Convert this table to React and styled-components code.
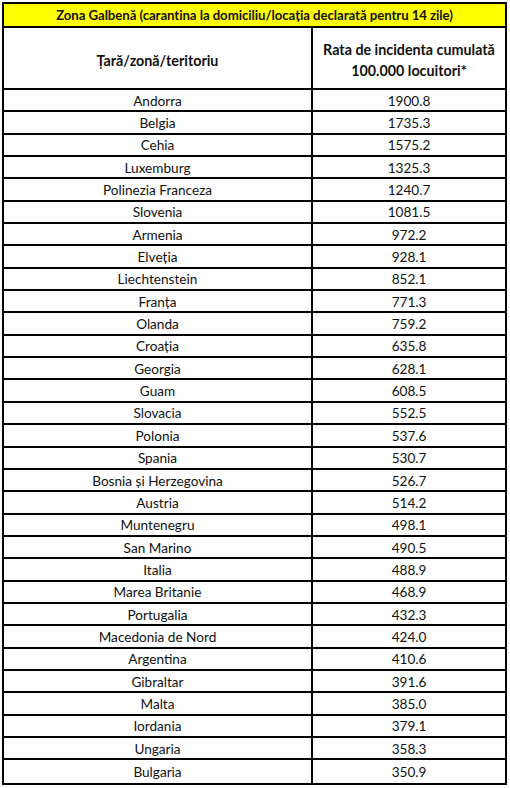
import React from "react";
import styled, { createGlobalStyle } from "styled-components";

const rows = [
  ["Andorra", "1900.8"],
  ["Belgia", "1735.3"],
  ["Cehia", "1575.2"],
  ["Luxemburg", "1325.3"],
  ["Polinezia Franceza", "1240.7"],
  ["Slovenia", "1081.5"],
  ["Armenia", "972.2"],
  ["Elveția", "928.1"],
  ["Liechtenstein", "852.1"],
  ["Franța", "771.3"],
  ["Olanda", "759.2"],
  ["Croația", "635.8"],
  ["Georgia", "628.1"],
  ["Guam", "608.5"],
  ["Slovacia", "552.5"],
  ["Polonia", "537.6"],
  ["Spania", "530.7"],
  ["Bosnia și Herzegovina", "526.7"],
  ["Austria", "514.2"],
  ["Muntenegru", "498.1"],
  ["San Marino", "490.5"],
  ["Italia", "488.9"],
  ["Marea Britanie", "468.9"],
  ["Portugalia", "432.3"],
  ["Macedonia de Nord", "424.0"],
  ["Argentina", "410.6"],
  ["Gibraltar", "391.6"],
  ["Malta", "385.0"],
  ["Iordania", "379.1"],
  ["Ungaria", "358.3"],
  ["Bulgaria", "350.9"],
];

export default function App() {
  return (
    <>
      <GlobalStyle />
      <Sheet>
        <Title>Zona Galbenă (carantina la domiciliu/locația declarată pentru 14 zile)</Title>
        <HeadRow>
          <HeadCell>Țară/zonă/teritoriu</HeadCell>
          <HeadCell>
            Rata de incidenta cumulată
            <br />
            100.000 locuitori*
          </HeadCell>
        </HeadRow>
        {rows.map(([name, rate], i) => (
          <Row key={name} last={i === rows.length - 1}>
            <Cell>{name}</Cell>
            <Cell>{rate}</Cell>
          </Row>
        ))}
      </Sheet>
    </>
  );
}

const GlobalStyle = createGlobalStyle`
  body {
    margin: 0;
    background: #fff;
    font-family: "Lato", "Liberation Sans", sans-serif;
    color: #111;
  }
`;

const Sheet = styled.div`
  margin: 2px 0 0 2px;
  width: 505px;
  box-sizing: border-box;
  border: 2px solid #000;
`;

const Title = styled.div`
  height: 24px;
  box-sizing: border-box;
  border-bottom: 2px solid #000;
  background: #ffff00;
  display: flex;
  align-items: center;
  justify-content: center;
  font-weight: 700;
  font-size: 13.2px;
  letter-spacing: -0.05px;
`;

const HeadRow = styled.div`
  display: grid;
  grid-template-columns: 307px 1fr;
  height: 62px;
  box-sizing: border-box;
  border-bottom: 2px solid #000;
`;

const HeadCell = styled.div`
  display: flex;
  align-items: center;
  justify-content: center;
  text-align: center;
  font-weight: 700;
  font-size: 14.3px;
  line-height: 21px;
  padding-top: 4px;

  & + & {
    border-left: 2px solid #000;
  }
`;

const Row = styled.div`
  display: grid;
  grid-template-columns: 307px 1fr;
  height: 22.35px;
  box-sizing: border-box;
  border-bottom: ${({ last }) => (last ? "none" : "2px solid #000")};
`;

const Cell = styled.div`
  display: flex;
  align-items: center;
  justify-content: center;
  font-size: 13.6px;
  padding-top: 1px;

  & + & {
    border-left: 2px solid #000;
  }
`;
